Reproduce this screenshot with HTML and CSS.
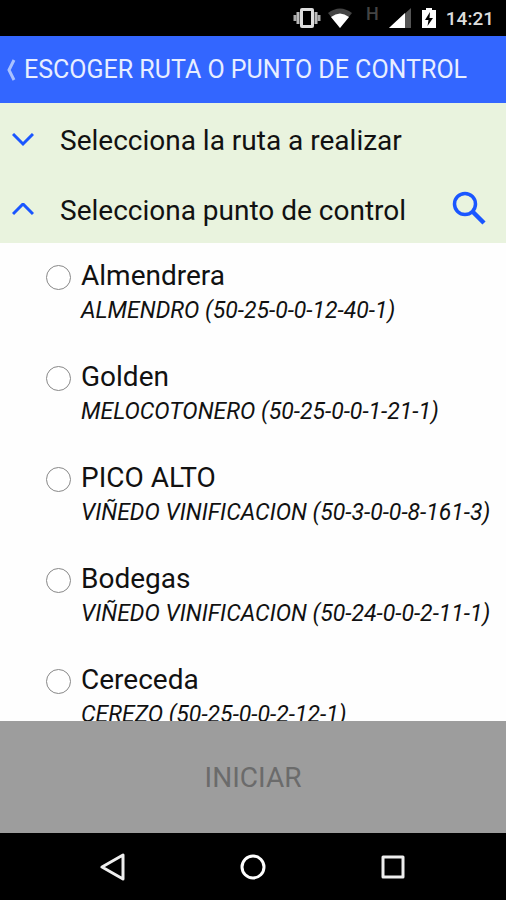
FILE: index.html
```html
<!DOCTYPE html>
<html lang="es">
<head>
    <meta charset="UTF-8">
    <meta name="viewport" content="width=device-width, initial-scale=1.0">
    <title>Escoger ruta o punto de control</title>
    <link rel="stylesheet" href="styles.css">
</head>
<body>
    <div class="screen">
        <!-- Status bar -->
        <div class="status-bar">
            <svg width="28" height="20" viewBox="0 0 28 20">
                <rect x="7" y="0" width="14" height="20" rx="2" fill="#ddd"/>
                <rect x="10" y="3" width="8" height="14" fill="#000"/>
                <path d="M5 4v12M23 4v12" stroke="#bbb" stroke-width="3"/>
                <path d="M2 7v6M26 7v6" stroke="#aaa" stroke-width="3"/>
            </svg>
            <svg class="wifi" width="26" height="20" viewBox="0 0 26 20">
                <path d="M13 20L1 5Q13 -4 25 5Z" fill="#444"/>
                <path d="M13 20L4 9Q13 2 22 9Z" fill="#fff"/>
            </svg>
            <span class="network">H</span>
            <svg class="signal" width="22" height="20" viewBox="0 0 22 20">
                <path d="M22 0V20H0Z" fill="#555"/>
                <path d="M16 5V20H0Z" fill="#fff"/>
            </svg>
            <svg class="battery" width="14" height="20" viewBox="0 0 14 20">
                <path d="M4 0h6v2h4v18H0V2h4z" fill="#fff"/>
                <path d="M8 4L3 12h3.500L5.500 18L11 10H7.500z" fill="#000"/>
            </svg>
            <span class="time">14:21</span>
        </div>

        <!-- Header -->
        <header class="header">
            <a href="#" class="back" aria-label="Volver">
                <svg width="10" height="22" viewBox="0 0 10 22" fill="none" stroke="#a9c2ff" stroke-width="3">
                    <path d="M8 1L3 11L8 21"/>
                </svg>
            </a>
            <h1>ESCOGER RUTA O PUNTO DE CONTROL</h1>
        </header>

        <!-- Sections -->
        <div class="section">
            <button type="button" class="section-toggle" aria-expanded="false">
                <svg width="22" height="14" viewBox="0 0 22 14" fill="none" stroke="#1a56ff" stroke-width="3">
                    <path d="M1 1L11 11L21 1"/>
                </svg>
                Selecciona la ruta a realizar
            </button>
        </div>
        <div class="section">
            <button type="button" class="section-toggle" aria-expanded="true">
                <svg width="22" height="14" viewBox="0 0 22 14" fill="none" stroke="#1a56ff" stroke-width="3">
                    <path d="M1 11L11 1L21 11"/>
                </svg>
                Selecciona punto de control
            </button>
            <button type="button" class="search" aria-label="Buscar">
                <svg width="34" height="34" viewBox="0 0 34 34" fill="none" stroke="#1a56ff">
                    <circle cx="13" cy="13" r="10.500" stroke-width="3.500"/>
                    <path d="M21 21L32 32" stroke-width="4.500"/>
                </svg>
            </button>
        </div>

        <!-- Control points -->
        <form class="points">
            <label class="point">
                <input type="radio" name="point">
                <span class="point-text">
                    <span class="name">Almendrera</span>
                    <span class="detail">ALMENDRO (50-25-0-0-12-40-1)</span>
                </span>
            </label>
            <label class="point">
                <input type="radio" name="point">
                <span class="point-text">
                    <span class="name">Golden</span>
                    <span class="detail">MELOCOTONERO (50-25-0-0-1-21-1)</span>
                </span>
            </label>
            <label class="point">
                <input type="radio" name="point">
                <span class="point-text">
                    <span class="name">PICO ALTO</span>
                    <span class="detail">VIÑEDO VINIFICACION (50-3-0-0-8-161-3)</span>
                </span>
            </label>
            <label class="point">
                <input type="radio" name="point">
                <span class="point-text">
                    <span class="name">Bodegas</span>
                    <span class="detail">VIÑEDO VINIFICACION (50-24-0-0-2-11-1)</span>
                </span>
            </label>
            <label class="point">
                <input type="radio" name="point">
                <span class="point-text">
                    <span class="name">Cereceda</span>
                    <span class="detail">CEREZO (50-25-0-0-2-12-1)</span>
                </span>
            </label>
        </form>

        <button type="button" class="start" disabled>INICIAR</button>

        <!-- Navigation bar -->
        <nav class="nav-bar">
            <button type="button" aria-label="Atrás">
                <svg width="28" height="28" viewBox="0 0 28 28" fill="none" stroke="#eee" stroke-width="3" stroke-linejoin="round">
                    <path d="M24 2V26L3 14Z"/>
                </svg>
            </button>
            <button type="button" aria-label="Inicio">
                <svg width="28" height="28" viewBox="0 0 28 28" fill="none" stroke="#fff" stroke-width="3">
                    <circle cx="14" cy="14" r="11"/>
                </svg>
            </button>
            <button type="button" aria-label="Recientes">
                <svg width="28" height="28" viewBox="0 0 28 28" fill="none" stroke="#eee" stroke-width="3" stroke-linejoin="round">
                    <rect x="4" y="4" width="20" height="20"/>
                </svg>
            </button>
        </nav>
    </div>
</body>
</html>
```
FILE: styles.css
```css
* {
    margin: 0;
    padding: 0;
    box-sizing: border-box;
}

body {
    font-family: Roboto, sans-serif;
    background-color: #fefefe;
    color: #111;
}

button {
    font-family: inherit;
    background: none;
    border: none;
    cursor: pointer;
}

svg {
    display: block;
    flex-shrink: 0;
}

.screen {
    display: flex;
    flex-direction: column;
    height: 100vh;
}

/* Status bar */
.status-bar {
    display: flex;
    flex-shrink: 0;
    align-items: center;
    justify-content: flex-end;
    height: 36px;
    padding-right: 12px;
    background-color: #000;
    color: #ddd;
}

.wifi {
    margin-left: 6px;
}

.network {
    align-self: flex-start;
    margin: 4px 10px 0 13px;
    font-size: 18px;
    font-weight: 500;
    line-height: 20px;
    color: #444;
}

.battery {
    margin: 0 10px 0 11px;
}

.time {
    font-size: 19px;
    font-weight: 500;
}

/* Header */
.header {
    display: flex;
    flex-shrink: 0;
    align-items: center;
    gap: 8px;
    height: 67px;
    padding: 0 6px;
    background-color: #3366ff;
}

.header h1 {
    font-size: 25px;
    font-weight: 400;
    line-height: 32px;
    white-space: nowrap;
    color: #e8eeff;
}

/* Sections */
.section {
    display: flex;
    flex-shrink: 0;
    align-items: center;
    height: 70px;
    padding: 0 20px 0 12px;
    background-color: #e9f3de;
}

.section-toggle {
    display: flex;
    flex: 1;
    align-items: center;
    gap: 26px;
    height: 100%;
    padding-top: 4px;
    font-size: 28px;
    color: #111;
}

/* Control points */
.points {
    display: flex;
    flex: 1;
    flex-direction: column;
    gap: 32px;
    min-height: 0;
    padding: 16px 8px 0 46px;
    overflow: hidden;
}

.point {
    display: flex;
    gap: 10px;
}

.point input {
    flex-shrink: 0;
    width: 25px;
    height: 25px;
    margin-top: 6px;
    appearance: none;
    border: 1px solid #888;
    border-radius: 50%;
    background-color: #fff;
}

.point input:checked {
    border: 7px solid #3366ff;
}

.name,
.detail {
    display: block;
    white-space: nowrap;
}

.name {
    font-size: 28px;
    line-height: 34px;
}

.detail {
    font-size: 23px;
    font-style: italic;
    line-height: 35px;
}

.start {
    flex-shrink: 0;
    height: 112px;
    background-color: #9d9d9d;
    font-size: 28px;
    color: #6b6b6b;
}

/* Navigation bar */
.nav-bar {
    display: flex;
    flex-shrink: 0;
    align-items: center;
    justify-content: center;
    gap: 112px;
    height: 67px;
    background-color: #000;
}
```
